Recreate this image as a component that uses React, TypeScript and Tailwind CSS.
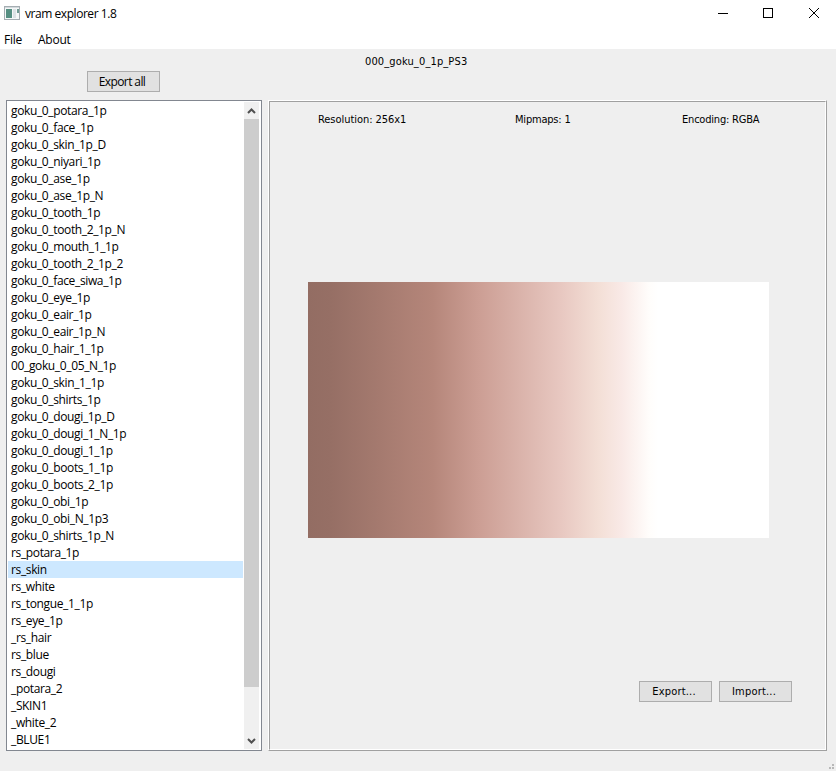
import React from 'react';

const entries = `goku_0_potara_1p
goku_0_face_1p
goku_0_skin_1p_D
goku_0_niyari_1p
goku_0_ase_1p
goku_0_ase_1p_N
goku_0_tooth_1p
goku_0_tooth_2_1p_N
goku_0_mouth_1_1p
goku_0_tooth_2_1p_2
goku_0_face_siwa_1p
goku_0_eye_1p
goku_0_eair_1p
goku_0_eair_1p_N
goku_0_hair_1_1p
00_goku_0_05_N_1p
goku_0_skin_1_1p
goku_0_shirts_1p
goku_0_dougi_1p_D
goku_0_dougi_1_N_1p
goku_0_dougi_1_1p
goku_0_boots_1_1p
goku_0_boots_2_1p
goku_0_obi_1p
goku_0_obi_N_1p3
goku_0_shirts_1p_N
rs_potara_1p
rs_skin
rs_white
rs_tongue_1_1p
rs_eye_1p
_rs_hair
rs_blue
rs_dougi
_potara_2
_SKIN1
_white_2
_BLUE1`.split('\n');

function Button({ children }: { children: React.ReactNode }) {
  return (
    <button className="flex h-[21px] w-[73px] items-center justify-center border border-[#adadad] bg-[#e1e1e1] pr-[3px] pt-px">
      {children}
    </button>
  );
}

export default function App() {
  return (
    <div className="flex h-[771px] w-[836px] flex-col overflow-hidden bg-[#efefef] font-['DejaVu_Sans_Condensed','DejaVu_Sans',sans-serif] text-[11px] leading-[16px] tracking-[-0.1px] text-black [font-stretch:condensed]">
      <header className="h-[49px] shrink-0 bg-white font-['Open_Sans',sans-serif] text-[12px] tracking-[-0.25px] [font-stretch:normal]">
        <div className="flex h-[28px]">
          <svg className="ml-1 mt-1.5 h-[14px] w-[16px]" viewBox="0 0 16 14">
            <rect x=".5" y=".5" width="15" height="13" fill="#f5f7f8" stroke="#a5adb2" />
            <rect x="1" y="1" width="14" height="1" fill="#d2d9dc" />
            <rect x="2" y="3" width="6" height="9" fill="#568f82" />
            <rect x="9" y="3" width="3" height="9" fill="#dce2e5" />
            <rect x="13" y="3" width="2" height="4" fill="#719b95" />
          </svg>
          <span className="ml-[5px] mt-[6px] tracking-[-0.45px]">vram explorer 1.8</span>
          <svg className="ml-auto mr-4 h-[28px] w-[104px]" viewBox="0 0 104 28" fill="none" stroke="black" shapeRendering="crispEdges">
            <path d="M2 13.5h10M47.5 8.5h9v9h-9z" />
            <path d="m93 8 10 10m0-10-10 10" shapeRendering="auto" />
          </svg>
        </div>
        <nav className="flex gap-[16px] pl-1 pt-1">
          <span>File</span>
          <span>About</span>
        </nav>
      </header>
      <div className="h-[51px] shrink-0">
        <div className="h-[22px] pl-[365px] pt-[5px] tracking-[0.13px]">000_goku_0_1p_PS3</div>
        <div className="pl-[87px] font-['Open_Sans',sans-serif] text-[12px] tracking-[-0.6px] [font-stretch:normal]"><Button>Export all</Button></div>
      </div>
      <main className="flex h-[651px] shrink-0 pl-1.5">
        <section className="flex h-[651px] w-[256px] border border-[#828790] bg-white p-px">
          <ul className="w-[235px] font-['Open_Sans',sans-serif] text-[12px] tracking-[-0.36px] [font-stretch:normal]">
            {entries.map((name) => (
              <li key={name} className={`h-[17px] pl-[3px] leading-[17px] ${name === 'rs_skin' ? 'bg-[#cde8ff]' : ''}`}>{name}</li>
            ))}
          </ul>
          <div className="ml-px flex w-[15px] flex-col bg-[#f0f0f0]">
            <svg className="h-[17px] w-[15px]" viewBox="0 0 15 17" fill="none" stroke="#505050" strokeWidth="2"><path d="m4 11 3.5-3.5L11 11" /></svg>
            <div className="h-[568px] bg-[#cdcdcd]" />
            <svg className="mt-auto h-[17px] w-[15px]" viewBox="0 0 15 17" fill="none" stroke="#505050" strokeWidth="2"><path d="m4 7 3.5 3.5L11 7" /></svg>
          </div>
        </section>
        <section className="ml-1.5 h-[651px] w-[559px] border border-b-[#a0a0a0] border-l-white border-r-[#a0a0a0] border-t-white">
          <div className="flex h-full flex-col border border-b-white border-l-[#a0a0a0] border-r-white border-t-[#a0a0a0]">
            <div className="flex h-[180px] pl-[48px] pt-[10px]">
              <span className="w-[197px] tracking-[-0.05px]">Resolution: 256x1</span>
              <span className="w-[167px] tracking-[-0.2px]">Mipmaps: 1</span>
              <span className="tracking-[-0.2px]">Encoding: RGBA</span>
            </div>
            <div className="ml-[38px] h-[256px] w-[461px] bg-[linear-gradient(90deg,#936d63_0%,#966f65_5%,#b5867a_27%,#cc9e94_37%,#e8c8c1_55%,#f3dfd6_63%,#f9e9e6_68%,#fffdfb_74%,#fff_76%)]" />
            <div className="ml-[369px] mt-[143px] flex gap-[7px] tracking-[0.2px]">
              <Button>Export...</Button>
              <Button>Import...</Button>
            </div>
          </div>
        </section>
      </main>
      <footer className="flex flex-1 items-end justify-end pb-[2px] pr-[2px]">
        <svg className="h-[5px] w-[5px]" viewBox="0 0 5 5" fill="#b8b8b8"><path d="M3 0h2v2H3zM0 3h2v2H0zM3 3h2v2H3z" /></svg>
      </footer>
    </div>
  );
}
